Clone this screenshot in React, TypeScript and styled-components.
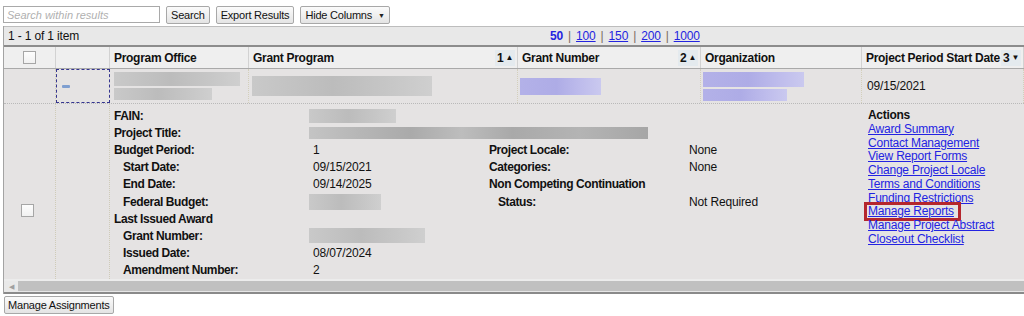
import React from 'react';
import styled, { createGlobalStyle, css } from 'styled-components';

const Global = createGlobalStyle`
  html, body { margin: 0; padding: 0; background: #fff; }
  body { font-family: "Liberation Sans", Arial, sans-serif; font-size: 12px; color: #111; letter-spacing: -0.15px; }
  * { box-sizing: border-box; }
`;

const Page = styled.div`
  width: 1024px;
  height: 316px;
  overflow: hidden;
`;

const Toolbar = styled.div`
  display: flex;
  align-items: flex-start;
  gap: 6px;
  height: 26px;
  padding: 6px 0 0 3px;
`;

const SearchInput = styled.input`
  width: 157px;
  height: 17px;
  border: 1px solid #a9a9a9;
  padding: 0 3px;
  font-family: "Liberation Sans", Arial, sans-serif;
  font-size: 11px;
  &::placeholder { color: #b0b0b0; font-style: italic; }
`;

const Button = styled.button`
  height: 18px;
  padding: 0 4px;
  border: 1px solid #a8a8a8;
  border-radius: 2px;
  background: linear-gradient(#fbfbfb, #e4e4e4);
  font-family: "Liberation Sans", Arial, sans-serif;
  font-size: 11px;
  letter-spacing: -0.2px;
  color: #111;
  display: inline-flex;
  align-items: center;
  gap: 6px;
  line-height: 1;
`;

const Caret = styled.span`
  font-size: 7px;
  color: #222;
`;

const Grid = styled.div`
  margin-left: 3px;
  border-left: 1px solid #a3a3a3;
  width: 1021px;
`;

const PagerBar = styled.div`
  display: flex;
  align-items: center;
  height: 21px;
  border-top: 1px solid #bdbdbd;
  border-bottom: 2px solid #8c8c8c;
  background: #e8e8e8;
  padding-left: 4px;
`;

const ItemCount = styled.div`
  width: 542px;
`;

const Pager = styled.div`
  display: flex;
  align-items: center;
  gap: 5px;
`;

const PageLink = styled.a<{ $current?: boolean }>`
  color: #2424e0;
  text-decoration: ${(p) => (p.$current ? 'none' : 'underline')};
  font-weight: ${(p) => (p.$current ? 'bold' : 'normal')};
  cursor: pointer;
`;

const Sep = styled.span`
  color: #7a6a60;
`;

const COLS = '52px 54px 139px 269px 183px 161px 162px';

const HeaderRow = styled.div`
  display: grid;
  grid-template-columns: ${COLS};
  height: 22px;
  background: #efefef;
  border-bottom: 1px solid #a9a9a9;
`;

const HeaderCell = styled.div<{ $center?: boolean }>`
  display: flex;
  align-items: center;
  justify-content: ${(p) => (p.$center ? 'center' : 'space-between')};
  padding: 0 4px;
  border-right: 1px solid #d2d2d2;
  font-weight: bold;
  letter-spacing: -0.3px;
  white-space: nowrap;
  overflow: hidden;
`;

const SortMark = styled.span`
  display: inline-flex;
  align-items: center;
  gap: 2px;
  padding: 1px 2px;
  margin-right: -2px;
  background: #e4eaee;
  font-weight: bold;
`;

const SortArrow = styled.span`
  font-size: 8px;
`;

const CheckBox = styled.span`
  display: inline-block;
  width: 13px;
  height: 13px;
  border: 1px solid #a6a6a6;
  background: linear-gradient(#fdfdfd, #f1f1f1);
`;

const DataRow = styled.div`
  display: grid;
  grid-template-columns: ${COLS};
  height: 35px;
  background: #e5e3e3;
  border-bottom: 1px dotted #b9b9b9;
`;

const DataCell = styled.div<{ $focus?: boolean }>`
  display: flex;
  flex-direction: column;
  justify-content: center;
  gap: 2px;
  padding: 0 3px;
  border-right: 1px dotted #d3cfbb;
  ${(p) =>
    p.$focus &&
    css`
      border: 1px dashed #35358f;
      padding: 0 5px;
    `}
`;

const Collapse = styled.span`
  display: block;
  width: 8px;
  height: 3px;
  border-radius: 1px;
  background: #7f9fd0;
`;

const Blur = styled.div<{ $w: number; $h: number; $tone?: 'gray' | 'purple' | 'dark'; $shift?: number }>`
  width: ${(p) => p.$w}px;
  height: ${(p) => p.$h}px;
  margin-left: ${(p) => p.$shift ?? 0}px;
  filter: blur(0.5px);
  background: ${(p) =>
    p.$tone === 'purple'
      ? 'linear-gradient(90deg, #b3b1e8 0%, #aeace6 45%, #bebcec 75%, #cac9ef 100%)'
      : p.$tone === 'dark'
      ? 'linear-gradient(90deg, #c4c4c4 0%, #b6b6b6 15%, #aaaaaa 30%, #bdbdbd 45%, #a9a9a9 60%, #b4b4b4 80%, #a6a6a6 100%)'
      : 'linear-gradient(90deg, #c9c9c9 0%, #bcbcbc 45%, #c6c6c6 75%, #cfcfcf 100%)'};
`;

const DateText = styled.span`
  padding-left: 2px;
`;

const DetailRow = styled.div`
  display: grid;
  grid-template-columns: 52px 54px 1fr;
  height: 175px;
  background: #e5e3e3;
`;

const DetailSide = styled.div<{ $check?: boolean }>`
  border-right: 1px dotted #cfcbb8;
  ${(p) =>
    p.$check &&
    css`
      display: flex;
      justify-content: center;
      padding-top: 100px;
      padding-right: 4px;
    `}
`;

const DetailContent = styled.div`
  display: flex;
  padding: 3px 0 0 4px;
`;

const InfoGrid = styled.div`
  display: grid;
  grid-template-columns: 199px 176px 200px 179px;
  grid-auto-rows: 17.2px;
  align-items: center;
  white-space: nowrap;
`;

const Label = styled.span<{ $indent?: boolean; $span?: number }>`
  font-weight: bold;
  letter-spacing: -0.4px;
  padding-left: ${(p) => (p.$indent ? 9 : 0)}px;
  ${(p) => p.$span && css`grid-column: span ${p.$span};`}
`;

const Value = styled.span<{ $span?: number }>`
  ${(p) => p.$span && css`grid-column: span ${p.$span};`}
`;

const Empty = styled.span<{ $span?: number }>`
  ${(p) => p.$span && css`grid-column: span ${p.$span};`}
`;

const Actions = styled.div`
  display: flex;
  flex-direction: column;
  padding-top: 2px;
  line-height: 13.75px;
`;

const ActionsTitle = styled.span`
  font-weight: bold;
  letter-spacing: -0.3px;
`;

const ActionLink = styled.a<{ $marked?: boolean }>`
  position: relative;
  align-self: flex-start;
  color: #2323e2;
  text-decoration: underline;
  letter-spacing: -0.2px;
  cursor: pointer;
  ${(p) =>
    p.$marked &&
    css`
      &::after {
        content: '';
        position: absolute;
        left: -4px;
        right: -7px;
        top: -3px;
        bottom: -2px;
        border: 3px solid #b5262d;
      }
    `}
`;

const Scrollbar = styled.div`
  display: flex;
  height: 15px;
  border-top: 2px solid #ececec;
  border-bottom: 2px solid #8a8a8a;
  box-shadow: inset 0 -1px 0 #e6e6e6;
  background: #c0c0c0;
`;

const ScrollButton = styled.span`
  width: 14px;
  background: #e9e9e9;
  color: #a0a0a0;
  font-size: 7px;
  display: flex;
  align-items: center;
  justify-content: center;
`;

const Footer = styled.div`
  padding: 2px 0 0 4px;
`;

const FooterButton = styled(Button)`
  height: 18px;
  padding: 0 3px;
`;

const links = [
  'Award Summary',
  'Contact Management',
  'View Report Forms',
  'Change Project Locale',
  'Terms and Conditions',
  'Funding Restrictions',
  'Manage Reports',
  'Manage Project Abstract',
  'Closeout Checklist',
];

export default function App() {
  return (
    <Page>
      <Global />
      <Toolbar>
        <SearchInput placeholder="Search within results" />
        <Button>Search</Button>
        <Button>Export Results</Button>
        <Button>
          Hide Columns <Caret>▼</Caret>
        </Button>
      </Toolbar>
      <Grid>
        <PagerBar>
          <ItemCount>1 - 1 of 1 item</ItemCount>
          <Pager>
            <PageLink $current>50</PageLink>
            <Sep>|</Sep>
            <PageLink>100</PageLink>
            <Sep>|</Sep>
            <PageLink>150</PageLink>
            <Sep>|</Sep>
            <PageLink>200</PageLink>
            <Sep>|</Sep>
            <PageLink>1000</PageLink>
          </Pager>
        </PagerBar>
        <HeaderRow>
          <HeaderCell $center>
            <CheckBox />
          </HeaderCell>
          <HeaderCell />
          <HeaderCell>Program Office</HeaderCell>
          <HeaderCell>
            Grant Program
            <SortMark>
              1<SortArrow>▲</SortArrow>
            </SortMark>
          </HeaderCell>
          <HeaderCell>
            Grant Number
            <SortMark>
              2<SortArrow>▲</SortArrow>
            </SortMark>
          </HeaderCell>
          <HeaderCell>Organization</HeaderCell>
          <HeaderCell>
            Project Period Start Date
            <SortMark>
              3<SortArrow>▼</SortArrow>
            </SortMark>
          </HeaderCell>
        </HeaderRow>
        <DataRow>
          <DataCell />
          <DataCell $focus>
            <Collapse />
          </DataCell>
          <DataCell>
            <Blur $w={126} $h={14} $shift={1} />
            <Blur $w={98} $h={12} $shift={1} />
          </DataCell>
          <DataCell>
            <Blur $w={180} $h={20} />
          </DataCell>
          <DataCell>
            <Blur $w={81} $h={17} $tone="purple" $shift={-1} />
          </DataCell>
          <DataCell>
            <Blur $w={101} $h={15} $tone="purple" $shift={-1} />
            <Blur $w={84} $h={12} $tone="purple" $shift={-1} />
          </DataCell>
          <DataCell>
            <DateText>09/15/2021</DateText>
          </DataCell>
        </DataRow>
        <DetailRow>
          <DetailSide $check>
            <CheckBox />
          </DetailSide>
          <DetailSide />
          <DetailContent>
            <InfoGrid>
              <Label>FAIN:</Label>
              <Blur $w={87} $h={14} $shift={-4} />
              <Empty $span={2} />

              <Label>Project Title:</Label>
              <Value $span={3}>
                <Blur $w={339} $h={12} $tone="dark" $shift={-4} />
              </Value>

              <Label>Budget Period:</Label>
              <Value>1</Value>
              <Label>Project Locale:</Label>
              <Value>None</Value>

              <Label $indent>Start Date:</Label>
              <Value>09/15/2021</Value>
              <Label>Categories:</Label>
              <Value>None</Value>

              <Label $indent>End Date:</Label>
              <Value>09/14/2025</Value>
              <Label $span={2}>Non Competing Continuation</Label>

              <Label $indent>Federal Budget:</Label>
              <Blur $w={72} $h={16} $shift={-4} />
              <Label $indent>Status:</Label>
              <Value>Not Required</Value>

              <Label $span={4}>Last Issued Award</Label>

              <Label $indent>Grant Number:</Label>
              <Blur $w={116} $h={15} $shift={-4} />
              <Empty $span={2} />

              <Label $indent>Issued Date:</Label>
              <Value>08/07/2024</Value>
              <Empty $span={2} />

              <Label $indent>Amendment Number:</Label>
              <Value>2</Value>
              <Empty $span={2} />
            </InfoGrid>
            <Actions>
              <ActionsTitle>Actions</ActionsTitle>
              {links.map((l) => (
                <ActionLink key={l} $marked={l === 'Manage Reports'}>
                  {l}
                </ActionLink>
              ))}
            </Actions>
          </DetailContent>
        </DetailRow>
        <Scrollbar>
          <ScrollButton>◀</ScrollButton>
        </Scrollbar>
      </Grid>
      <Footer>
        <FooterButton>Manage Assignments</FooterButton>
      </Footer>
    </Page>
  );
}
